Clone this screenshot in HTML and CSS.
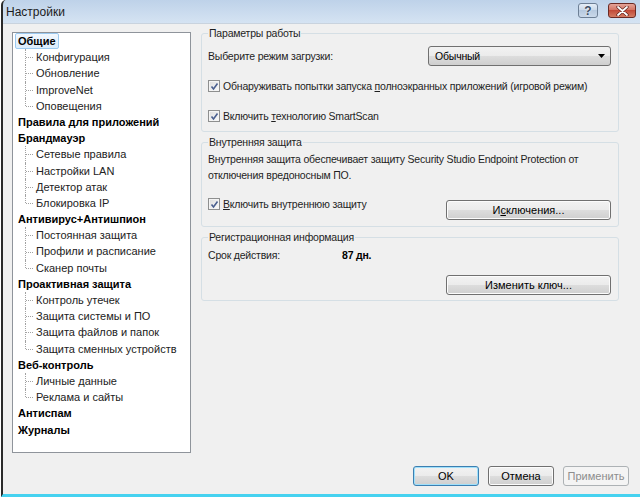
FILE: index.html
```html
<!DOCTYPE html>
<html lang="ru">
<head>
    <meta charset="UTF-8">
    <title>Настройки</title>
    <link rel="stylesheet" href="styles.css">
</head>
<body>
    <div class="window">
        <div class="titlebar">
            <span class="title">Настройки</span>
            <div class="caption">
                <span class="cap-btn help">?</span>
                <span class="cap-btn close">
                    <svg width="13" height="10" viewBox="0 0 13 10">
                        <path d="M2 1 L11 9 M11 1 L2 9" stroke="#5a1f1a" stroke-width="3.2" stroke-linecap="round"/>
                        <path d="M2 1 L11 9 M11 1 L2 9" stroke="#fff" stroke-width="1.8" stroke-linecap="round"/>
                    </svg>
                </span>
            </div>
        </div>
        <div class="client">
            <div class="main">
                <ul class="tree">
                    <li class="node"><span class="sel">Общие</span></li>
                    <li class="child">Конфигурация</li>
                    <li class="child">Обновление</li>
                    <li class="child">ImproveNet</li>
                    <li class="child last">Оповещения</li>
                    <li class="node">Правила для приложений</li>
                    <li class="node">Брандмауэр</li>
                    <li class="child">Сетевые правила</li>
                    <li class="child">Настройки LAN</li>
                    <li class="child">Детектор атак</li>
                    <li class="child last">Блокировка IP</li>
                    <li class="node">Антивирус+Антишпион</li>
                    <li class="child">Постоянная защита</li>
                    <li class="child">Профили и расписание</li>
                    <li class="child last">Сканер почты</li>
                    <li class="node">Проактивная защита</li>
                    <li class="child">Контроль утечек</li>
                    <li class="child">Защита системы и ПО</li>
                    <li class="child">Защита файлов и папок</li>
                    <li class="child last">Защита сменных устройств</li>
                    <li class="node">Веб-контроль</li>
                    <li class="child">Личные данные</li>
                    <li class="child last">Реклама и сайты</li>
                    <li class="node">Антиспам</li>
                    <li class="node">Журналы</li>
                </ul>

                <div class="panels">
                    <fieldset class="group work">
                        <legend>Параметры работы</legend>
                        <div class="row mode">
                            <span>Выберите режим загрузки:</span>
                            <div class="select">
                                <span>Обычный</span>
                                <svg width="7" height="4" viewBox="0 0 7 4"><path d="M0 0 H7 L3.5 4 Z" fill="#000"/></svg>
                            </div>
                        </div>
                        <label class="check game">
                            <span class="cb"><svg width="9" height="9" viewBox="0 0 9 9"><path d="M1.5 4.5 L3.5 7 L7.5 1.5" fill="none" stroke="#4a5f8f" stroke-width="1.6"/></svg></span>
                            <span>Обнаруживать попытки запуска <u>п</u>олноэкранных приложений (игровой режим)</span>
                        </label>
                        <label class="check smart">
                            <span class="cb"><svg width="9" height="9" viewBox="0 0 9 9"><path d="M1.5 4.5 L3.5 7 L7.5 1.5" fill="none" stroke="#4a5f8f" stroke-width="1.6"/></svg></span>
                            <span>Включить <u>т</u>ехнологию SmartScan</span>
                        </label>
                    </fieldset>

                    <fieldset class="group self">
                        <legend>Внутренняя защита</legend>
                        <p class="desc">Внутренняя защита обеспечивает защиту Security Studio Endpoint Protection от<br>отключения вредоносным ПО.</p>
                        <div class="row split">
                            <label class="check">
                                <span class="cb"><svg width="9" height="9" viewBox="0 0 9 9"><path d="M1.5 4.5 L3.5 7 L7.5 1.5" fill="none" stroke="#4a5f8f" stroke-width="1.6"/></svg></span>
                                <span><u>В</u>ключить внутреннюю защиту</span>
                            </label>
                            <button class="btn wide">И<u>с</u>ключения...</button>
                        </div>
                    </fieldset>

                    <fieldset class="group reg">
                        <legend>Регистрационная информация</legend>
                        <div class="term">
                            <span class="term-label">Срок действия:</span>
                            <b>87 дн.</b>
                        </div>
                        <div class="row end">
                            <button class="btn wide">Изменить ключ...</button>
                        </div>
                    </fieldset>
                </div>
            </div>

            <div class="footer">
                <button class="btn default">OK</button>
                <button class="btn">Отмена</button>
                <button class="btn" disabled>Применить</button>
            </div>
        </div>
    </div>
</body>
</html>
```

FILE: styles.css
```css
* {
    margin: 0;
    padding: 0;
    box-sizing: border-box;
}

body {
    font-family: "Liberation Sans", Arial, sans-serif;
    font-size: 11px;
    color: #1e1e1e;
    background: #fff;
    width: 640px;
    height: 497px;
    overflow: hidden;
}

.window {
    width: 640px;
    height: 497px;
    display: flex;
    flex-direction: column;
    border-left: 2px solid #2a2a2a;
    margin-left: 1px;
    border-bottom: 3px solid #46d2f0;
    border-top-left-radius: 5px;
    background: linear-gradient(#bed2e9, #d6e4f3 24px, #f0f0f0 24px);
}

.titlebar {
    height: 23px;
    display: flex;
    align-items: flex-start;
    justify-content: space-between;
    padding-left: 3px;
}

.title {
    font-size: 12px;
    line-height: 24px;
    color: #1b1b1b;
}

.caption {
    display: flex;
    gap: 10px;
    margin-top: 3px;
    margin-right: 5px;
}

.cap-btn {
    height: 15px;
    border: 1px solid #6d7f95;
    border-radius: 3px;
    display: flex;
    align-items: center;
    justify-content: center;
}

.help {
    width: 20px;
    background: linear-gradient(#e4edf7, #c8d7e8 50%, #b6c9df 50%, #cad9ea);
    color: #3c4c63;
    font-size: 12px;
    font-weight: bold;
    text-shadow: 0 0 2px #fff;
}

.close {
    width: 28px;
    border-color: #6b2a24;
    background: linear-gradient(#e4a499, #d2705f 50%, #c24a38 50%, #d47c63);
}

.client {
    flex: 1;
    display: flex;
    flex-direction: column;
    background: #f0f0f0;
    border-top: 1px solid #c9d3de;
}

.main {
    display: flex;
    gap: 10px;
    padding: 3px 0 0 9px;
}

/* дерево разделов */
.tree {
    list-style: none;
    width: 179px;
    height: 421px;
    margin-top: 5px;
    background: #fff;
    border: 1px solid #8f949b;
    padding: 0 0 0 2px;
}

.tree li {
    height: 16.2px;
    line-height: 16.2px;
    position: relative;
    white-space: nowrap;
}

.tree .node {
    font-weight: bold;
    color: #000;
    padding-left: 3px;
}

.tree .sel {
    display: inline-block;
    margin-left: -3px;
    padding: 0 2px 0 2px;
    height: 16px;
    line-height: 14px;
    border: 1px solid #9ccaf0;
    border-radius: 2px;
    background: linear-gradient(#f2f8fe, #dbecfc);
}

.tree .child {
    padding-left: 21px;
    color: #222;
}

.tree .child::before {
    content: "";
    position: absolute;
    left: 10px;
    top: 0;
    bottom: 0;
    border-left: 1px dotted #a2a2a2;
}

.tree .child.last::before {
    bottom: 50%;
}

.tree .child::after {
    content: "";
    position: absolute;
    left: 11px;
    top: 50%;
    width: 7px;
    border-top: 1px dotted #a2a2a2;
}

/* правая часть */
.panels {
    width: 418px;
    display: flex;
    flex-direction: column;
    gap: 4px;
    font-size: 10.5px;
    letter-spacing: -0.2px;
}

.group {
    border: 1px solid #d5dfe5;
    border-radius: 3px;
    padding: 0 6px;
    min-width: 0;
}

.group legend {
    padding: 0 1px;
    line-height: 13px;
    color: #1e1e1e;
}

.row {
    display: flex;
    align-items: center;
}

.mode {
    justify-content: space-between;
    margin-top: 6px;
    padding-right: 1px;
}

.select {
    width: 183px;
    height: 20px;
    border: 1px solid #707070;
    border-radius: 3px;
    background: linear-gradient(#f2f2f2, #ebebeb 50%, #dddddd 50%, #cfcfcf);
    display: flex;
    align-items: center;
    justify-content: space-between;
    padding: 0 5px 0 6px;
    color: #000;
}

.check {
    display: flex;
    align-items: center;
    gap: 3px;
    height: 14px;
    white-space: nowrap;
}

.cb {
    width: 12px;
    height: 12px;
    flex: none;
    border: 1px solid #8e8f8f;
    background: linear-gradient(135deg, #dcdcdc, #fbfbfb);
    display: flex;
    align-items: center;
    justify-content: center;
    box-shadow: inset 0 0 0 1px #f4f4f4;
}

.game {
    margin-top: 13px;
}

.smart {
    margin-top: 16px;
    margin-bottom: 8px;
}

.desc {
    margin-top: 2px;
    line-height: 16px;
    white-space: nowrap;
}

.split {
    justify-content: space-between;
    align-items: flex-start;
    margin-top: 17px;
    margin-bottom: 6px;
    padding-right: 1px;
}

.split .check {
    margin-top: -3px;
}

.btn {
    font-family: inherit;
    font-size: 11px;
    letter-spacing: 0;
    color: #000;
    height: 20px;
    width: 66px;
    border: 1px solid #707070;
    border-radius: 3px;
    background: linear-gradient(#f2f2f2, #ebebeb 50%, #dddddd 50%, #cfcfcf);
    box-shadow: inset 0 0 0 1px #fcfcfc;
}

.btn.wide {
    width: 165px;
}

.btn.default {
    border-color: #3c7fb1;
    box-shadow: inset 0 0 0 1px #9fe0fb;
}

.btn:disabled {
    color: #8d8d8d;
    border-color: #adb2b5;
    background: #f4f4f4;
    box-shadow: none;
}

.term {
    display: flex;
    margin-top: 3px;
    line-height: 16px;
}

.term-label {
    width: 134px;
}

.term b {
    color: #000;
}

.end {
    justify-content: flex-end;
    margin-top: 12px;
    margin-bottom: 5px;
    padding-right: 1px;
}

.footer {
    margin-top: auto;
    display: flex;
    justify-content: flex-end;
    gap: 9px;
    padding: 0 12px 8px 0;
}
```
